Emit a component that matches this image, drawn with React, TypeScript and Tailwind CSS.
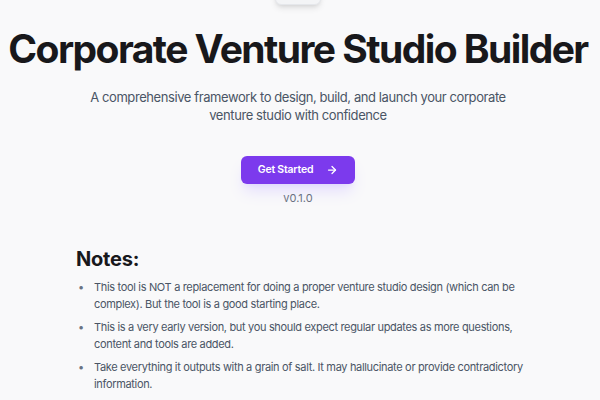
import { ArrowRight } from 'lucide-react';

const notes = [
  'This tool is NOT a replacement for doing a proper venture studio design (which can be complex). But the tool is a good starting place.',
  'This is a very early version, but you should expect regular updates as more questions, content and tools are added.',
  'Take everything it outputs with a grain of salt. It may hallucinate or provide contradictory information.'
];

export default function App() {
  return (
    <div
      className="min-h-screen bg-[#f9f9fa] overflow-hidden"
      style={{ fontFamily: 'Inter, "Noto Sans", sans-serif' }}
    >
      <div className="flex flex-col items-center pr-1">
        <div className="w-[46px] h-[20px] -mt-[15px] rounded-md border border-gray-200 bg-gray-100 shadow-md" />

        <h1 className="mt-[18px] text-[39px] leading-[52px] font-bold tracking-[-0.04em] text-[#18181b] whitespace-nowrap">
          Corporate Venture Studio Builder
        </h1>

        <p className="mt-[13px] w-[430px] text-center text-[13px] leading-[18px] tracking-[-0.032em] text-gray-600">
          A comprehensive framework to design, build, and launch your corporate venture studio with confidence
        </p>

        <button className="mt-[32px] w-[114px] h-[28px] flex items-center justify-center gap-[13px] rounded-md bg-[#7c3aed] text-white text-[10.5px] font-semibold tracking-[-0.02em] shadow-lg shadow-violet-300/40">
          Get Started
          <ArrowRight className="w-3 h-3" strokeWidth={2.5} />
        </button>

        <div className="mt-[7px] text-[11px] leading-[14px] text-gray-500">v0.1.0</div>
      </div>

      <div className="mx-auto w-[448px] mt-[42px]">
        <h2 className="text-[20px] leading-[24px] font-bold tracking-[-0.01em] text-[#18181b]">Notes:</h2>
        <ul className="mt-[8px] flex flex-col gap-[6px]">
          {notes.map((note) => (
            <li key={note} className="flex gap-[8px] text-[11px] leading-[17px] tracking-[-0.03em] text-gray-600">
              <span className="w-[10px] shrink-0 text-center text-gray-500">•</span>
              <span>{note}</span>
            </li>
          ))}
        </ul>
      </div>
    </div>
  );
}
